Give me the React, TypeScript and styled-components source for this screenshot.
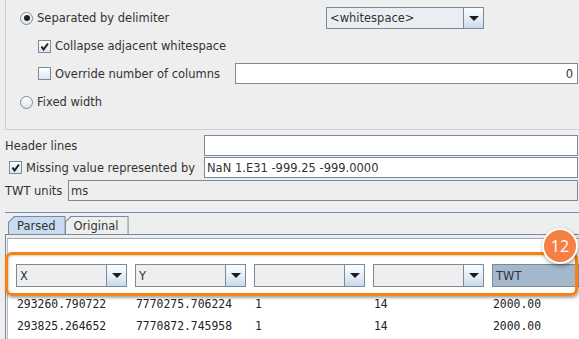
import * as React from "react";
import styled, { createGlobalStyle } from "styled-components";

const GlobalStyle = createGlobalStyle`
  html, body {
    margin: 0;
    padding: 0;
    background: #eeeeee;
  }
  body {
    font-family: "DejaVu Sans", "Liberation Sans", sans-serif;
    font-size: 11.5px;
    color: #333333;
  }
`;

const border = "#7a8a99";

const Page = styled.div`
  position: relative;
  width: 579px;
  height: 339px;
  overflow: hidden;
  background: #eeeeee;
`;

const OptionsPanel = styled.div`
  box-sizing: border-box;
  height: 130px;
  margin-left: 5px;
  padding-top: 7px;
  border-left: 1px solid #cbd2da;
  border-bottom: 1px solid #c6d0db;
  display: flex;
  flex-direction: column;
`;

const OptionRow = styled.div<{ $h: number; $mt: number; $indent: number }>`
  display: flex;
  align-items: center;
  height: ${p => p.$h}px;
  margin-top: ${p => p.$mt}px;
  padding-left: ${p => p.$indent}px;
  padding-right: 1px;
`;

const LabelGroup = styled.div<{ $w?: number }>`
  display: flex;
  align-items: center;
  gap: 4px;
  flex: none;
  width: ${p => (p.$w ? `${p.$w}px` : "auto")};
  white-space: nowrap;
`;

const RadioCircle = styled.span<{ $on?: boolean }>`
  box-sizing: border-box;
  width: 13px;
  height: 13px;
  border-radius: 50%;
  border: 1px solid ${border};
  background: linear-gradient(#ffffff, #dbe4ee);
  display: flex;
  align-items: center;
  justify-content: center;
  &::after {
    content: "";
    display: ${p => (p.$on ? "block" : "none")};
    width: 6px;
    height: 6px;
    border-radius: 50%;
    background: #222222;
  }
`;

const CheckBox = styled.span`
  box-sizing: border-box;
  width: 13px;
  height: 13px;
  border: 1px solid ${border};
  background: linear-gradient(#ffffff, #dce5ef);
  display: flex;
  align-items: center;
  justify-content: center;
  flex: none;
`;

const Text = styled.span`
  color: #333333;
`;

const ComboBox = styled.div<{ $w: number; $sel?: boolean }>`
  box-sizing: border-box;
  display: flex;
  flex: none;
  width: ${p => p.$w}px;
  height: 100%;
  border: 1px solid ${border};
  background: ${p => (p.$sel ? "#a3b8cc" : "#eeeeee")};
`;

const ComboText = styled.div<{ $tint?: boolean }>`
  flex: 1;
  display: flex;
  align-items: center;
  padding-left: 3px;
  background: ${p => (p.$tint ? "#eaeef3" : "transparent")};
  white-space: nowrap;
`;

const ComboButton = styled.div`
  width: 19px;
  flex: none;
  border-left: 1px solid ${border};
  background: linear-gradient(#fbfdff, #e4edf6 55%, #c7d8ea);
  display: flex;
  align-items: center;
  justify-content: center;
  &::after {
    content: "";
    border-left: 5px solid transparent;
    border-right: 5px solid transparent;
    border-top: 5px solid #1c1c1c;
  }
`;

const TextField = styled.div<{ $bg?: string; $right?: boolean }>`
  box-sizing: border-box;
  flex: 1;
  height: 100%;
  border: 1px solid ${border};
  background: ${p => p.$bg || "#ffffff"};
  display: flex;
  align-items: center;
  justify-content: ${p => (p.$right ? "flex-end" : "flex-start")};
  padding: 0 4px 0 2px;
  white-space: nowrap;
  overflow: hidden;
`;

const FieldsBlock = styled.div`
  display: flex;
  flex-direction: column;
  padding-top: 5px;
`;

const FieldRow = styled.div<{ $mt: number }>`
  display: flex;
  align-items: center;
  height: 21px;
  margin-top: ${p => p.$mt}px;
  padding-right: 1px;
`;

const FieldLabel = styled.div<{ $w: number; $indent: number }>`
  box-sizing: border-box;
  display: flex;
  align-items: center;
  gap: 4px;
  flex: none;
  width: ${p => p.$w}px;
  padding-left: ${p => p.$indent}px;
  white-space: nowrap;
`;

const Separator = styled.div`
  height: 1px;
  margin: 11px 0 0 5px;
  background: #6d8cc2;
`;

const TabStrip = styled.div`
  display: flex;
  padding: 3px 0 0 8px;
  height: 18px;
`;

const TabOuter = styled.div`
  background: ${border};
  padding: 1px 1px 0 1px;
  margin-right: -1px;
  clip-path: polygon(6px 0, 100% 0, 100% 100%, 0 100%, 0 6px);
`;

const TabInner = styled.div<{ $active?: boolean }>`
  box-sizing: border-box;
  height: 17px;
  display: flex;
  align-items: center;
  padding: 0 9px 0 8px;
  background: ${p => (p.$active ? "#c8dbf0" : "#eeeeee")};
  clip-path: polygon(5.6px 0, 100% 0, 100% 100%, 0 100%, 0 5.6px);
  white-space: nowrap;
`;

const TabContent = styled.div`
  margin-left: 5px;
  border-top: 1px solid ${border};
  border-left: 1px solid ${border};
  padding: 3px 0 0 1px;
  height: 120px;
`;

const TablePanel = styled.div`
  background: #ffffff;
  border-top: 1px solid #9aa8b7;
  border-left: 1px solid #b4bfca;
  height: 110px;
  padding: 25px 0 0 8px;
`;

const Columns = styled.div`
  display: grid;
  grid-template-columns: repeat(5, 111px);
  column-gap: 8px;
`;

const HeaderRow = styled(Columns)`
  height: 23px;
`;

const DataRow = styled(Columns)<{ $first?: boolean }>`
  height: 22px;
  margin-top: ${p => (p.$first ? 6 : 0)}px;
  align-items: center;
  font-family: "DejaVu Sans Mono", "Liberation Mono", monospace;
  font-size: 11.4px;
  color: #222222;
`;

const Cell = styled.div`
  padding-left: 1px;
  white-space: nowrap;
`;

const Highlight = styled.div`
  position: absolute;
  left: 5px;
  top: 252px;
  width: 573px;
  height: 44px;
  box-sizing: border-box;
  border: 3px solid #f98310;
  border-radius: 7px;
  box-shadow: 1px 2px 3px rgba(0, 0, 0, 0.35), inset 1px 1px 2px rgba(0, 0, 0, 0.2);
  pointer-events: none;
`;

const Badge = styled.div`
  position: absolute;
  left: 542px;
  top: 228px;
  width: 36px;
  height: 36px;
  box-sizing: border-box;
  border-radius: 50%;
  border: 2px solid #ffffff;
  background: #f57f45;
  box-shadow: 1px 2px 4px rgba(0, 0, 0, 0.4);
  color: #ffffff;
  font-family: "Open Sans", "Liberation Sans", sans-serif;
  font-size: 16px;
  display: flex;
  align-items: center;
  justify-content: center;
`;

function Check(): React.ReactElement {
  return (
    <CheckBox>
      <svg width="11" height="11" viewBox="0 0 11 11">
        <path d="M2.5 5.5 L4.5 8.5 L9 2.5" fill="none" stroke="#1e1e1e" strokeWidth="2" />
      </svg>
    </CheckBox>
  );
}

function EmptyCheck(): React.ReactElement {
  return <CheckBox />;
}

function Combo({ label, width, tint, selected, arrow = true }: {
  label: string;
  width: number;
  tint?: boolean;
  selected?: boolean;
  arrow?: boolean;
}): React.ReactElement {
  return (
    <ComboBox $w={width} $sel={selected}>
      <ComboText $tint={tint}>{label}</ComboText>
      {arrow && <ComboButton />}
    </ComboBox>
  );
}

const columnNames = ["X", "Y", "", "", "TWT"];
const rows = [
  ["293260.790722", "7770275.706224", "1", "14", "2000.00"],
  ["293825.264652", "7770872.745958", "1", "14", "2000.00"]
];

export default function App(): React.ReactElement {
  return (
    <Page>
      <GlobalStyle />
      <OptionsPanel>
        <OptionRow $h={22} $mt={0} $indent={14}>
          <LabelGroup $w={306}>
            <RadioCircle $on />
            <Text>Separated by delimiter</Text>
          </LabelGroup>
          <Combo label="<whitespace>" width={158} tint />
        </OptionRow>
        <OptionRow $h={20} $mt={7} $indent={32}>
          <LabelGroup>
            <Check />
            <Text>Collapse adjacent whitespace</Text>
          </LabelGroup>
        </OptionRow>
        <OptionRow $h={21} $mt={7} $indent={32}>
          <LabelGroup $w={197}>
            <EmptyCheck />
            <Text>Override number of columns</Text>
          </LabelGroup>
          <TextField $right>0</TextField>
        </OptionRow>
        <OptionRow $h={20} $mt={8} $indent={14}>
          <LabelGroup>
            <RadioCircle />
            <Text>Fixed width</Text>
          </LabelGroup>
        </OptionRow>
      </OptionsPanel>

      <FieldsBlock>
        <FieldRow $mt={0}>
          <FieldLabel $w={204} $indent={5}>Header lines</FieldLabel>
          <TextField />
        </FieldRow>
        <FieldRow $mt={1}>
          <FieldLabel $w={204} $indent={9}>
            <Check />
            <Text>Missing value represented by</Text>
          </FieldLabel>
          <TextField>NaN 1.E31 -999.25 -999.0000</TextField>
        </FieldRow>
        <FieldRow $mt={2}>
          <FieldLabel $w={68} $indent={5}>TWT units</FieldLabel>
          <TextField $bg="#eeeeee">ms</TextField>
        </FieldRow>
      </FieldsBlock>

      <Separator />

      <TabStrip>
        <TabOuter>
          <TabInner $active>Parsed</TabInner>
        </TabOuter>
        <TabOuter>
          <TabInner>Original</TabInner>
        </TabOuter>
      </TabStrip>

      <TabContent>
        <TablePanel>
          <HeaderRow>
            {columnNames.map((name, i) => (
              <Combo
                key={i}
                label={name}
                width={111}
                selected={name === "TWT"}
                arrow={name !== "TWT"}
              />
            ))}
          </HeaderRow>
          {rows.map((row, r) => (
            <DataRow key={r} $first={r === 0}>
              {row.map((v, c) => (
                <Cell key={c}>{v}</Cell>
              ))}
            </DataRow>
          ))}
        </TablePanel>
      </TabContent>

      <Highlight />
      <Badge>12</Badge>
    </Page>
  );
}
